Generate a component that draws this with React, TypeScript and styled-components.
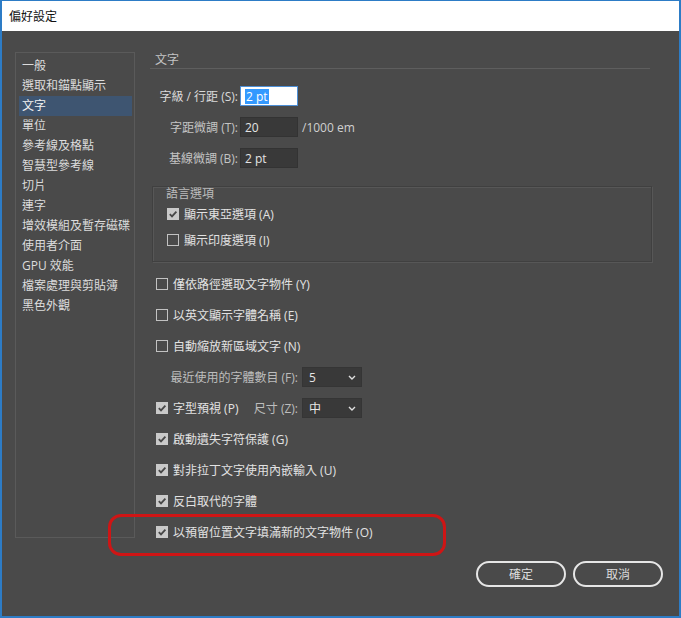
import React from "react";
import styled, { createGlobalStyle } from "styled-components";

const GlobalStyle = createGlobalStyle`
  html, body {
    margin: 0;
    padding: 0;
    background: #4a4a4a;
    overflow: hidden;
  }
  * {
    box-sizing: border-box;
  }
`;

const FONT = `"Open Sans", "Noto Sans CJK TC", sans-serif`;

const Window = styled.div`
  width: 681px;
  height: 618px;
  display: flex;
  flex-direction: column;
  background: #4a4a4a;
  border: 2px solid #2d7cc6;
  border-top-width: 1px;
  font-family: ${FONT};
  font-size: 12px;
  color: #d8d8d8;
`;

const TitleBar = styled.div`
  height: 30px;
  flex: none;
  display: flex;
  align-items: center;
  padding-left: 7px;
  background: #ffffff;
  color: #111111;
  font-size: 12px;
`;

const Body = styled.div`
  flex: 1;
  display: flex;
  flex-direction: column;
  padding: 21px 14px 0 13px;
`;

const MainRow = styled.div`
  display: flex;
  align-items: flex-start;
  gap: 15px;
  height: 490px;
`;

const Sidebar = styled.ul`
  list-style: none;
  margin: 0;
  width: 120px;
  height: 486px;
  flex: none;
  padding: 3px 2px 0 3px;
  border: 1px solid #5a5a5a;
`;

const SideItem = styled.li<{ $active?: boolean }>`
  height: 20px;
  line-height: 20px;
  padding-left: 3px;
  white-space: nowrap;
  color: ${({ $active }) => ($active ? "#f2f2f2" : "#dcdcdc")};
  background: ${({ $active }) => ($active ? "#3e5571" : "transparent")};
`;

const Content = styled.div`
  width: 500px;
  display: flex;
  flex-direction: column;
`;

const Heading = styled.div`
  height: 17px;
  line-height: 16px;
  padding-left: 5px;
  color: #c4c4c4;
  border-bottom: 1px solid #5e5e5e;
`;

const FieldList = styled.div`
  margin-top: 17px;
  display: flex;
  flex-direction: column;
  gap: 11px;
`;

const FieldRow = styled.div`
  display: flex;
  align-items: center;
  height: 20px;
  padding-left: 5px;
`;

const FieldLabel = styled.span<{ $dim?: boolean }>`
  width: 83px;
  margin-right: 2px;
  text-align: right;
  white-space: nowrap;
  color: ${({ $dim }) => ($dim ? "#c4c4c4" : "#dadada")};
`;

const TextInput = styled.div<{ $focused?: boolean }>`
  width: 58px;
  height: 20px;
  display: flex;
  align-items: center;
  padding-left: 4px;
  background: ${({ $focused }) => ($focused ? "#ffffff" : "#393939")};
  border: 1px solid ${({ $focused }) => ($focused ? "#4d8fd6" : "#333333")};
  color: #e4e4e4;
`;

const Selected = styled.span`
  background: #3399ff;
  color: #ffffff;
  padding: 0 1px;
  line-height: 15px;
`;

const Unit = styled.span`
  margin-left: 4px;
  color: #d0d0d0;
`;

const Group = styled.div`
  margin-top: 18px;
  margin-left: 2px;
  width: 500px;
  height: 76px;
  border: 1px solid #404040;
  box-shadow: inset 1px 1px 0 #575757, 1px 1px 0 #575757;
  padding: 0 0 0 13px;
  display: flex;
  flex-direction: column;
`;

const GroupTitle = styled.div`
  height: 14px;
  line-height: 14px;
  color: #bcbcbc;
`;

const GroupRows = styled.div`
  margin-top: 3px;
  display: flex;
  flex-direction: column;
  gap: 6px;
`;

const OptionList = styled.div`
  margin-top: 12px;
  display: flex;
  flex-direction: column;
  gap: 11px;
`;

const CheckRow = styled.label<{ $indent?: number }>`
  position: relative;
  display: flex;
  align-items: center;
  gap: 5px;
  height: 20px;
  padding-left: ${({ $indent }) => $indent ?? 6}px;
  white-space: nowrap;
  color: #e2e2e2;
`;

const Box = styled.span<{ $checked?: boolean }>`
  width: 12px;
  height: 12px;
  flex: none;
  display: flex;
  align-items: center;
  justify-content: center;
  background: ${({ $checked }) => ($checked ? "#c9c9c9" : "transparent")};
  border: 1px solid ${({ $checked }) => ($checked ? "#c9c9c9" : "#c2c2c2")};
`;

const SelectRow = styled.div`
  display: flex;
  align-items: center;
  height: 20px;
  padding-left: 6px;
`;

const SelectLead = styled.div<{ $split?: boolean }>`
  width: 142px;
  margin-right: 4px;
  display: flex;
  align-items: center;
  justify-content: ${({ $split }) => ($split ? "space-between" : "flex-end")};
  white-space: nowrap;
`;

const DimLabel = styled.span`
  color: #bdbdbd;
`;

const Select = styled.div`
  width: 60px;
  height: 20px;
  display: flex;
  align-items: center;
  justify-content: space-between;
  padding: 0 5px 0 6px;
  background: #393939;
  border: 1px solid #353535;
  color: #e6e6e6;
`;

const Highlight = styled.span`
  position: absolute;
  left: -42px;
  top: -8px;
  width: 338px;
  height: 42px;
  border: 3px solid #cf1515;
  border-radius: 13px;
  pointer-events: none;
`;

const Footer = styled.div`
  margin-top: 19px;
  display: flex;
  justify-content: flex-end;
  gap: 7px;
  padding-right: 2px;
`;

const Button = styled.button`
  width: 90px;
  height: 26px;
  border: 2px solid #e6e6e6;
  border-radius: 13px;
  background: transparent;
  color: #dcdcdc;
  font-family: ${FONT};
  font-size: 12px;
  padding: 0;
`;

const Check = () => (
  <svg width="10" height="10" viewBox="0 0 10 10">
    <polyline
      points="1.8,5.2 4,7.4 8.4,2.6"
      fill="none"
      stroke="#474747"
      strokeWidth="1.8"
    />
  </svg>
);

const Chevron = () => (
  <svg width="8" height="5" viewBox="0 0 8 5">
    <polyline
      points="1,1 4,4 7,1"
      fill="none"
      stroke="#e0e0e0"
      strokeWidth="1.4"
    />
  </svg>
);

const CheckBox = ({ checked }: { checked?: boolean }) => (
  <Box $checked={checked}>{checked && <Check />}</Box>
);

const sideItems = [
  "一般",
  "選取和錨點顯示",
  "文字",
  "單位",
  "參考線及格點",
  "智慧型參考線",
  "切片",
  "連字",
  "增效模組及暫存磁碟",
  "使用者介面",
  "GPU 效能",
  "檔案處理與剪貼簿",
  "黑色外觀",
];

export default function App() {
  return (
    <>
      <GlobalStyle />
      <Window>
        <TitleBar>偏好設定</TitleBar>
        <Body>
          <MainRow>
            <Sidebar>
              {sideItems.map((item) => (
                <SideItem key={item} $active={item === "文字"}>
                  {item}
                </SideItem>
              ))}
            </Sidebar>
            <Content>
              <Heading>文字</Heading>
              <FieldList>
                <FieldRow>
                  <FieldLabel>字級 / 行距 (S):</FieldLabel>
                  <TextInput $focused>
                    <Selected>2 pt</Selected>
                  </TextInput>
                </FieldRow>
                <FieldRow>
                  <FieldLabel $dim>字距微調 (T):</FieldLabel>
                  <TextInput>20</TextInput>
                  <Unit>/1000 em</Unit>
                </FieldRow>
                <FieldRow>
                  <FieldLabel $dim>基線微調 (B):</FieldLabel>
                  <TextInput>2 pt</TextInput>
                </FieldRow>
              </FieldList>

              <Group>
                <GroupTitle>語言選項</GroupTitle>
                <GroupRows>
                  <CheckRow $indent={1}>
                    <CheckBox checked />
                    顯示東亞選項 (A)
                  </CheckRow>
                  <CheckRow $indent={1}>
                    <CheckBox />
                    顯示印度選項 (I)
                  </CheckRow>
                </GroupRows>
              </Group>

              <OptionList>
                <CheckRow>
                  <CheckBox />
                  僅依路徑選取文字物件 (Y)
                </CheckRow>
                <CheckRow>
                  <CheckBox />
                  以英文顯示字體名稱 (E)
                </CheckRow>
                <CheckRow>
                  <CheckBox />
                  自動縮放新區域文字 (N)
                </CheckRow>
                <SelectRow>
                  <SelectLead>
                    <DimLabel>最近使用的字體數目 (F):</DimLabel>
                  </SelectLead>
                  <Select>
                    5
                    <Chevron />
                  </Select>
                </SelectRow>
                <SelectRow>
                  <SelectLead $split>
                    <CheckRow $indent={0}>
                      <CheckBox checked />
                      字型預視 (P)
                    </CheckRow>
                    <DimLabel>尺寸 (Z):</DimLabel>
                  </SelectLead>
                  <Select>
                    中
                    <Chevron />
                  </Select>
                </SelectRow>
                <CheckRow>
                  <CheckBox checked />
                  啟動遺失字符保護 (G)
                </CheckRow>
                <CheckRow>
                  <CheckBox checked />
                  對非拉丁文字使用內嵌輸入 (U)
                </CheckRow>
                <CheckRow>
                  <CheckBox checked />
                  反白取代的字體
                </CheckRow>
                <CheckRow>
                  <Highlight />
                  <CheckBox checked />
                  以預留位置文字填滿新的文字物件 (O)
                </CheckRow>
              </OptionList>
            </Content>
          </MainRow>
          <Footer>
            <Button>確定</Button>
            <Button>取消</Button>
          </Footer>
        </Body>
      </Window>
    </>
  );
}
